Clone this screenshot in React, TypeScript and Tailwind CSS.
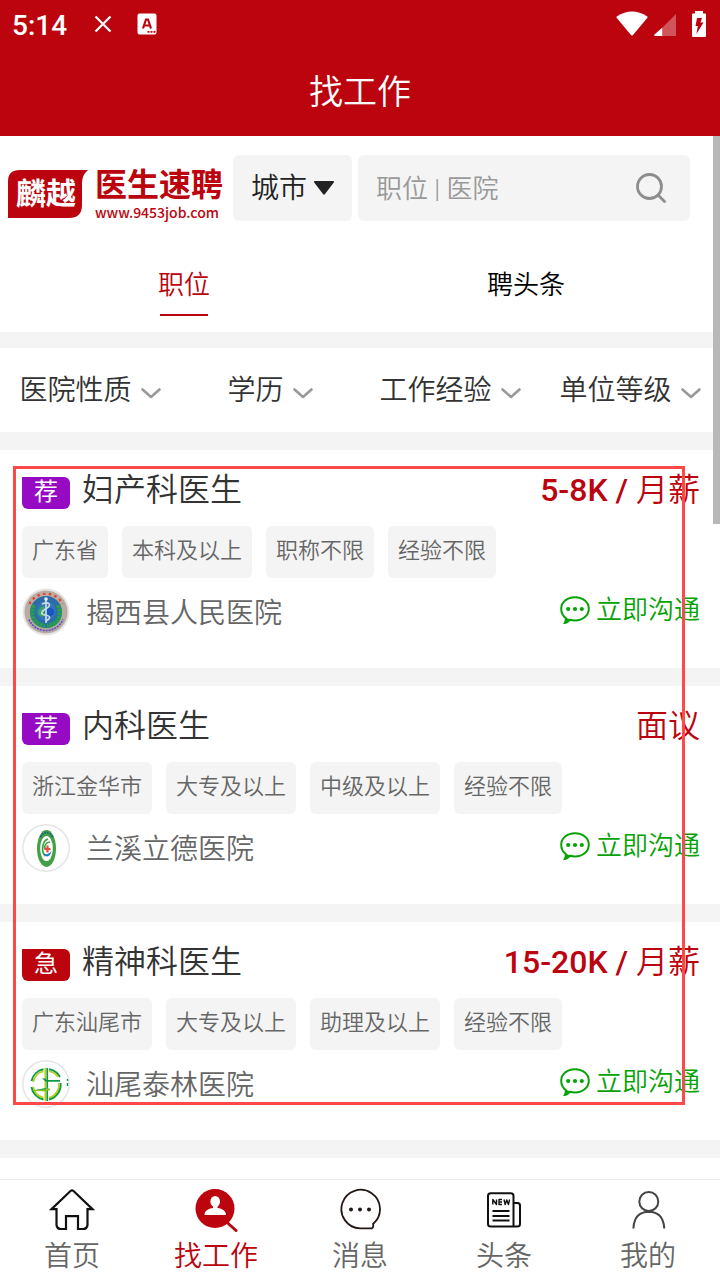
import React from 'react';

type Job = {
  badge: string;
  badgeClass: string;
  title: string;
  pay: string;
  tags: string[];
  hospital: string;
  logo: React.ReactNode;
};

const CountyLogo = () => (
  <svg viewBox="0 0 48 48" className="size-12" aria-hidden="true">
    <circle cx="24" cy="24" r="23.5" fill="#e4e4e4" />
    <circle cx="24" cy="24" r="21.5" fill="#b9aaa2" />
    <path d="M7.5 16A18.4 18.4 0 0 1 40.5 16" fill="none" stroke="#e5402a" strokeWidth="2.2" strokeDasharray="2.4 3.4" />
    <path d="M7 31.5A18.6 18.6 0 0 0 41 31.5" fill="none" stroke="#5a49c8" strokeWidth="1.6" strokeDasharray="2 1" />
    <circle cx="24" cy="24" r="16" fill="#2b6ca8" />
    <path d="M12 17C7 28 13 37 23 38M36 17c5 11-1 20-11 21" fill="none" stroke="#27a04c" strokeWidth="4.4" strokeDasharray="3 .8" />
    <circle cx="24" cy="23" r="10" fill="#3474b5" />
    <path d="M16 25c0-5 4-7 7-7-3 4 0 7 0 10-4 1-7 0-7-3z" fill="#35a666" />
    <path d="M25 20c5-1 8 2 7 5s-5 4-8 3z" fill="#1556c0" />
    <path d="M24 10v25" stroke="#e6eff4" strokeWidth="1.4" />
    <circle cx="24" cy="11" r="1.8" fill="#e8f0f5" />
    <path d="M20 16c7-3 10 1 5 4s-8 6-2 7 6 3 1 6" fill="none" stroke="#c9dbe6" strokeWidth="1.6" />
  </svg>
);

const LideLogo = () => (
  <svg viewBox="0 0 48 48" className="size-12" aria-hidden="true">
    <circle cx="24" cy="24" r="23.2" fill="#fff" stroke="#e6e6e6" strokeWidth="1.6" />
    <ellipse cx="24.5" cy="24.5" rx="9.5" ry="18.5" fill="#43a047" />
    <path d="M18.5 13c3-6 9-6 12 0" fill="none" stroke="#1c5f86" strokeWidth="2" strokeDasharray="1.6 1.2" />
    <ellipse cx="24.5" cy="24.5" rx="6.3" ry="12.6" fill="#fff" />
    <path d="M26 15c-6 2-7 12-3 17M28 18c-4 0-6 4-5 7" fill="none" stroke="#43a047" strokeWidth="1.7" />
    <path d="M20.5 28c2 3 6 3 9-1-1 6-6 8-9 1z" fill="#1f7fc4" />
    <path d="M25.5 21.5v7M22.5 25h6" stroke="#e9483d" strokeWidth="2.2" />
  </svg>
);

const TailinLogo = () => (
  <svg viewBox="0 0 48 48" className="size-12" aria-hidden="true">
    <circle cx="24" cy="24" r="23.2" fill="#fff" stroke="#e6e6e6" strokeWidth="1.6" />
    <path
      d="M21.500 9.300A15.200 15.200 0 0 0 9.500 21M27 9.300A15.200 15.200 0 0 1 38 17M9.500 27A15.200 15.200 0 0 0 21.500 39.500M27 39.500A15.200 15.200 0 0 0 38.500 23"
      fill="none"
      stroke="#0f9a4b"
      strokeWidth="2"
    />
    <path
      d="M21.500 11.200A13.300 13.300 0 0 0 11.300 22M27 11.200A13.300 13.300 0 0 1 36 17M11.300 27A13.300 13.300 0 0 0 21.500 37.700M27 37.700A13.300 13.300 0 0 0 36.800 23"
      fill="none"
      stroke="#b5cf1b"
      strokeWidth="1.600"
    />
    <path d="M22.500 8h2v33h-2z" fill="#b5cf1b" />
    <path d="M24.500 8h1.600v33h-1.600z" fill="#0f9a4b" />
    <path d="M20 18.500h4V20h14v1.800H24z" fill="#0f9a4b" />
    <path d="M10 30.800L23 28.500h5v2H24v1z" fill="#8fc31f" />
    <path d="M10 30.500L24 28v1.200z" fill="#0f9a4b" />
    <path d="M45.500 19v2M45.500 23v3" stroke="#0f9a4b" strokeWidth="1.400" />
  </svg>
);

const jobs: Job[] = [
  {
    badge: '荐',
    badgeClass: 'bg-[#960ac3]',
    title: '妇产科医生',
    pay: '5-8K / 月薪',
    tags: ['广东省', '本科及以上', '职称不限', '经验不限'],
    hospital: '揭西县人民医院',
    logo: <CountyLogo />,
  },
  {
    badge: '荐',
    badgeClass: 'bg-[#960ac3]',
    title: '内科医生',
    pay: '面议',
    tags: ['浙江金华市', '大专及以上', '中级及以上', '经验不限'],
    hospital: '兰溪立德医院',
    logo: <LideLogo />,
  },
  {
    badge: '急',
    badgeClass: 'bg-[#bb040e]',
    title: '精神科医生',
    pay: '15-20K / 月薪',
    tags: ['广东汕尾市', '大专及以上', '助理及以上', '经验不限'],
    hospital: '汕尾泰林医院',
    logo: <TailinLogo />,
  },
];

const filters = ['医院性质', '学历', '工作经验', '单位等级'];

function StatusBar() {
  return (
    <div className="flex h-12 items-center pr-[14px] pl-3 text-white">
      <span className="pt-1 text-[28px] leading-8 font-medium">5:14</span>
      <svg viewBox="0 0 18 18" className="ml-[27px] size-[18px]" aria-hidden="true">
        <path d="M1.500 1.500l15 15M16.500 1.500l-15 15" stroke="currentColor" strokeWidth="2.200" />
      </svg>
      <svg viewBox="0 0 20 22" className="ml-[25px] h-[22px] w-5" aria-hidden="true">
        <rect x=".5" y=".5" width="19" height="21" rx="2" fill="currentColor" />
        <path d="M6 15.500L9 6.500h2l3 9M7.500 12.500h5" fill="none" stroke="#bb040e" strokeWidth="2.200" />
        <path d="M10.500 18.800h2M13.500 18.800h2M16.500 18.800h2" stroke="#bb040e" strokeWidth="1.800" />
      </svg>
      <svg viewBox="0 0 32 26" className="ml-auto h-[26px] w-8" aria-hidden="true">
        <path d="M.8 5.500Q16-4.500 31.200 5.500a1 1 0 0 1 .2 1.300L17 24q-1 1-2 0L.6 6.800a1 1 0 0 1 .2-1.300z" fill="currentColor" />
      </svg>
      <svg viewBox="0 0 22 22" className="mt-[2px] ml-[6px] size-[22px]" aria-hidden="true">
        <path d="M22 0v22H8V14z" fill="currentColor" opacity=".32" />
        <path d="M8.200 13.800V22H1q-1.500-.5-.5-1.500z" fill="currentColor" />
      </svg>
      <svg viewBox="0 0 14 26" className="ml-4 h-[26px] w-[14px]" aria-hidden="true">
        <path d="M3 0h8v2.500h2q1 0 1 1V25q0 1-1 1H1q-1 0-1-1V3.500q0-1 1-1h2z" fill="currentColor" />
        <path d="M5 7h5L8.500 11.500h3L4.500 23l1.300-8H3.500z" fill="#bb040e" />
      </svg>
    </div>
  );
}

function Brand() {
  return (
    <a href="#home" className="flex items-center gap-[7px] pt-3 text-[#bb040e]" aria-label="麟越医生速聘">
      <span className="relative grid h-12 w-20 place-items-center">
        <svg viewBox="0 0 80 48" className="absolute inset-0 size-full" aria-hidden="true">
          <path d="M0 48V11Q0 0 12 0H80Q74 5 74 13V35Q74 48 61 48z" fill="currentColor" />
        </svg>
        <span className="relative pr-1 text-[30px] leading-9 font-bold text-white">麟越</span>
      </span>
      <span className="flex flex-col">
        <span className="text-[32px] leading-9 font-bold">医生速聘</span>
        <span className="font-['Noto_Sans_CJK_SC',sans-serif] text-[14px] leading-[18px] font-medium">www.9453job.com</span>
      </span>
    </a>
  );
}

function SearchRow() {
  return (
    <div className="flex items-center pr-[30px] pl-2">
      <Brand />
      <label className="ml-auto flex h-[66px] items-center gap-[6px] rounded-md bg-[#f4f4f4] pr-[18px] pl-[18px] text-[#222]">
        <select aria-label="城市" className="appearance-none bg-transparent pt-[2px] text-[28px] leading-10 outline-none">
          <option>城市</option>
        </select>
        <svg viewBox="0 0 20 14" className="h-[14px] w-5" aria-hidden="true">
          <path d="M1 0h18q1.500.5.8 1.500L11 13q-1 1.500-2 0L.2 1.500Q-.5.5 1 0z" fill="currentColor" />
        </svg>
      </label>
      <div className="ml-[6px] flex h-[66px] min-w-0 basis-[332px] items-center rounded-md bg-[#f4f4f4] pr-6 pl-[18px]">
        <input
          type="text"
          aria-label="搜索职位或医院"
          placeholder="职位 | 医院"
          className="min-w-0 flex-1 bg-transparent pt-[2px] text-[26px] leading-10 text-[#333] outline-none placeholder:text-[#999]"
        />
        <button type="button" aria-label="搜索" className="text-[#8d8d8d]">
          <svg viewBox="0 0 30 30" className="size-[30px]" fill="none" stroke="currentColor" strokeWidth="2.800" strokeLinecap="round" aria-hidden="true">
            <circle cx="13.500" cy="13.500" r="12" />
            <path d="M22.500 22.500l6 6" />
          </svg>
        </button>
      </div>
    </div>
  );
}

function Tabs() {
  return (
    <div role="tablist" className="grid grid-cols-2 pt-10 pr-[23px] pb-4 pl-[13px] text-[26px] leading-[48px]">
      <button type="button" role="tab" aria-selected="true" className="flex flex-col items-center text-[#bb040e]">
        职位
        <span className="mt-[5px] h-[2px] w-12 bg-[#bb040e]" />
      </button>
      <button type="button" role="tab" aria-selected="false" className="self-start text-black">
        聘头条
      </button>
    </div>
  );
}

function Filters() {
  return (
    <div className="grid h-[84px] grid-cols-4 items-center bg-white">
      {filters.map((name) => (
        <label key={name} className="flex items-center justify-center gap-2 text-[#333]">
          <select aria-label={name} className="appearance-none bg-transparent pt-[2px] text-[28px] leading-10 outline-none">
            <option>{name}</option>
          </select>
          <svg viewBox="0 0 20 12" className="mt-[6px] h-3 w-5" fill="none" stroke="#999" strokeWidth="2.600" strokeLinecap="round" strokeLinejoin="round" aria-hidden="true">
            <path d="M1.500 2.500l8.500 7.500 8.500-7.500" />
          </svg>
        </label>
      ))}
    </div>
  );
}

function Pay({ text }: { text: string }) {
  const unit = text.indexOf('月薪');
  if (unit < 0) return <>{text}</>;
  return (
    <>
      <span className="font-medium">{text.slice(0, unit)}</span>
      {text.slice(unit)}
    </>
  );
}

function JobCard({ job }: { job: Job }) {
  return (
    <article className="bg-white pt-[18px] pr-5 pb-8 pl-[22px]">
      <div className="flex h-11 items-center">
        <span className={`mt-[6px] h-8 w-12 rounded-md rounded-tl-none text-center text-[24px] leading-[30px] font-normal text-white ${job.badgeClass}`}>
          {job.badge}
        </span>
        <h2 className="ml-3 text-[32px] leading-[44px] text-[#333]">{job.title}</h2>
        <span className="ml-auto text-[32px] leading-[44px] text-[#bb040e]">
          <Pay text={job.pay} />
        </span>
      </div>
      <ul className="mt-[14px] flex gap-[14px]">
        {job.tags.map((tag) => (
          <li key={tag} className="h-[52px] rounded-md bg-[#f4f4f4] px-[10px] text-[22px] leading-[50px] text-[#666]">
            {tag}
          </li>
        ))}
      </ul>
      <div className="mt-[10px] flex h-12 items-center">
        {job.logo}
        <span className="ml-4 pt-1 text-[28px] leading-[48px] text-[#666]">{job.hospital}</span>
        <button type="button" className="ml-auto flex items-center gap-[6px] pb-1 text-[26px] leading-10 text-[#06a206]">
          <svg viewBox="0 0 30 28" className="h-7 w-[30px]" aria-hidden="true">
            <path d="M15 1.200c8 0 13.800 5 13.800 11.500S23 24.500 15 24.500c-1.800 0-3.300-.2-4.800-.7C8.500 25.500 7 26.500 4.800 27c.8-1.500 1.200-3.200.9-5C2.800 19.800 1.200 16.500 1.200 12.700 1.200 6.200 7 1.200 15 1.200z" fill="none" stroke="currentColor" strokeWidth="2" />
            <path d="M5.500 21.500l5.500 2.300L4.500 27.500z" fill="currentColor" />
            <circle cx="8.200" cy="13" r="2.100" fill="currentColor" />
            <circle cx="15" cy="13" r="2.100" fill="currentColor" />
            <circle cx="21.800" cy="13" r="2.100" fill="currentColor" />
          </svg>
          立即沟通
        </button>
      </div>
    </article>
  );
}

const navIcons: { label: string; icon: React.ReactNode }[] = [
  {
    label: '首页',
    icon: (
      <svg viewBox="0 0 46 44" className="h-11 w-[46px]" fill="none" stroke="#111" strokeWidth="2.200" aria-hidden="true">
        <path d="M21.500 3Q23 1.600 24.500 3L43.500 21.200H38.500V37Q38 41 34 41H29V28.200H17V41H12Q8 41 7.500 37V21.200H2.500z" />
      </svg>
    ),
  },
  {
    label: '找工作',
    icon: (
      <svg viewBox="0 0 44 44" className="size-11" aria-hidden="true">
        <circle cx="21" cy="20.500" r="19.500" fill="#bb040e" />
        <path d="M32 33.500l10 9" stroke="#bb040e" strokeWidth="3" strokeLinecap="round" />
        <ellipse cx="21.200" cy="13.500" rx="4.800" ry="5.500" fill="#fff" />
        <path d="M19 17h4.500v3c5 .8 8.500 3 8.500 7H10.500c0-4 3.500-6.200 8.500-7z" fill="#fff" />
      </svg>
    ),
  },
  {
    label: '消息',
    icon: (
      <svg viewBox="0 0 44 44" className="size-11" aria-hidden="true">
        <path d="M35 36A19.300 19.300 0 1 0 22 40.400H34Q36 38.500 35 36z" fill="#fff" stroke="#231815" strokeWidth="1.800" />
        <circle cx="13" cy="21.500" r="2" fill="#231815" />
        <circle cx="22" cy="21.500" r="2" fill="#231815" />
        <circle cx="31" cy="21.500" r="2" fill="#231815" />
      </svg>
    ),
  },
  {
    label: '头条',
    icon: (
      <svg viewBox="0 0 44 44" className="size-11" fill="none" stroke="#111" strokeWidth="2" strokeLinejoin="round" aria-hidden="true">
        <path d="M31.500 36V8q0-2.700-2.700-2.700H8.700Q6 5.300 6 8v28q0 2.500 2.700 2.500h26.600q2.700 0 2.700-2.500V17.500q0-2.500-2.500-2.500h-4M31.500 36v2.500" />
        <path d="M10.500 23h17M10.500 28h17M10.500 32.500h17" />
        <path d="M10.800 16.500v-5l3.700 5v-5M20 11.500h-3v5h3M17 14h3M22 11.500l1.200 5 1.600-4.500 1.600 4.500 1.200-5" strokeWidth="1.400" />
      </svg>
    ),
  },
  {
    label: '我的',
    icon: (
      <svg viewBox="0 0 44 44" className="size-11" fill="none" stroke="#444" strokeWidth="2" aria-hidden="true">
        <circle cx="22.800" cy="13.500" r="9.500" />
        <path d="M7.500 40.500V39.500Q8.500 24 22.800 23.700Q37 24 38.200 39.500V40.500" />
      </svg>
    ),
  },
];

export default function App() {
  return (
    <div className="flex min-h-screen flex-col bg-white font-['Roboto','Noto_Sans_CJK_SC',sans-serif] font-[350]">
      <header className="bg-[#bb040e]">
        <StatusBar />
        <h1 className="text-center text-[34px] leading-[88px] font-[350] text-white">找工作</h1>
      </header>

      <main className="relative grow">
        <div className="pt-[19px]">
          <SearchRow />
          <Tabs />
        </div>
        <div className="border-t-[16px] border-b-[18px] border-[#f4f4f4]">
          <Filters />
        </div>
        <section className="relative">
          <div className="flex flex-col gap-[18px] bg-[#f4f4f4] pb-[18px]">
            {jobs.map((job) => (
              <JobCard key={job.title} job={job} />
            ))}
          </div>
          <div className="pointer-events-none absolute top-4 right-[35px] bottom-[53px] left-[13px] border-[3px] border-[#ff4848]" />
        </section>
        <div className="absolute top-0 right-0 h-[388px] w-[7px] bg-[#b8b8b8]" />
      </main>

      <nav className="grid grid-cols-5 border-t border-[#e8e8e8] bg-white pt-2 pb-[3px]">
        {navIcons.map((item) => (
          <a
            key={item.label}
            href={`#${item.label}`}
            className={`flex flex-col items-center gap-[5px] text-[28px] leading-10 ${item.label === '找工作' ? 'text-[#bb040e]' : 'text-[#666]'}`}
          >
            {item.icon}
            {item.label}
          </a>
        ))}
      </nav>
    </div>
  );
}
